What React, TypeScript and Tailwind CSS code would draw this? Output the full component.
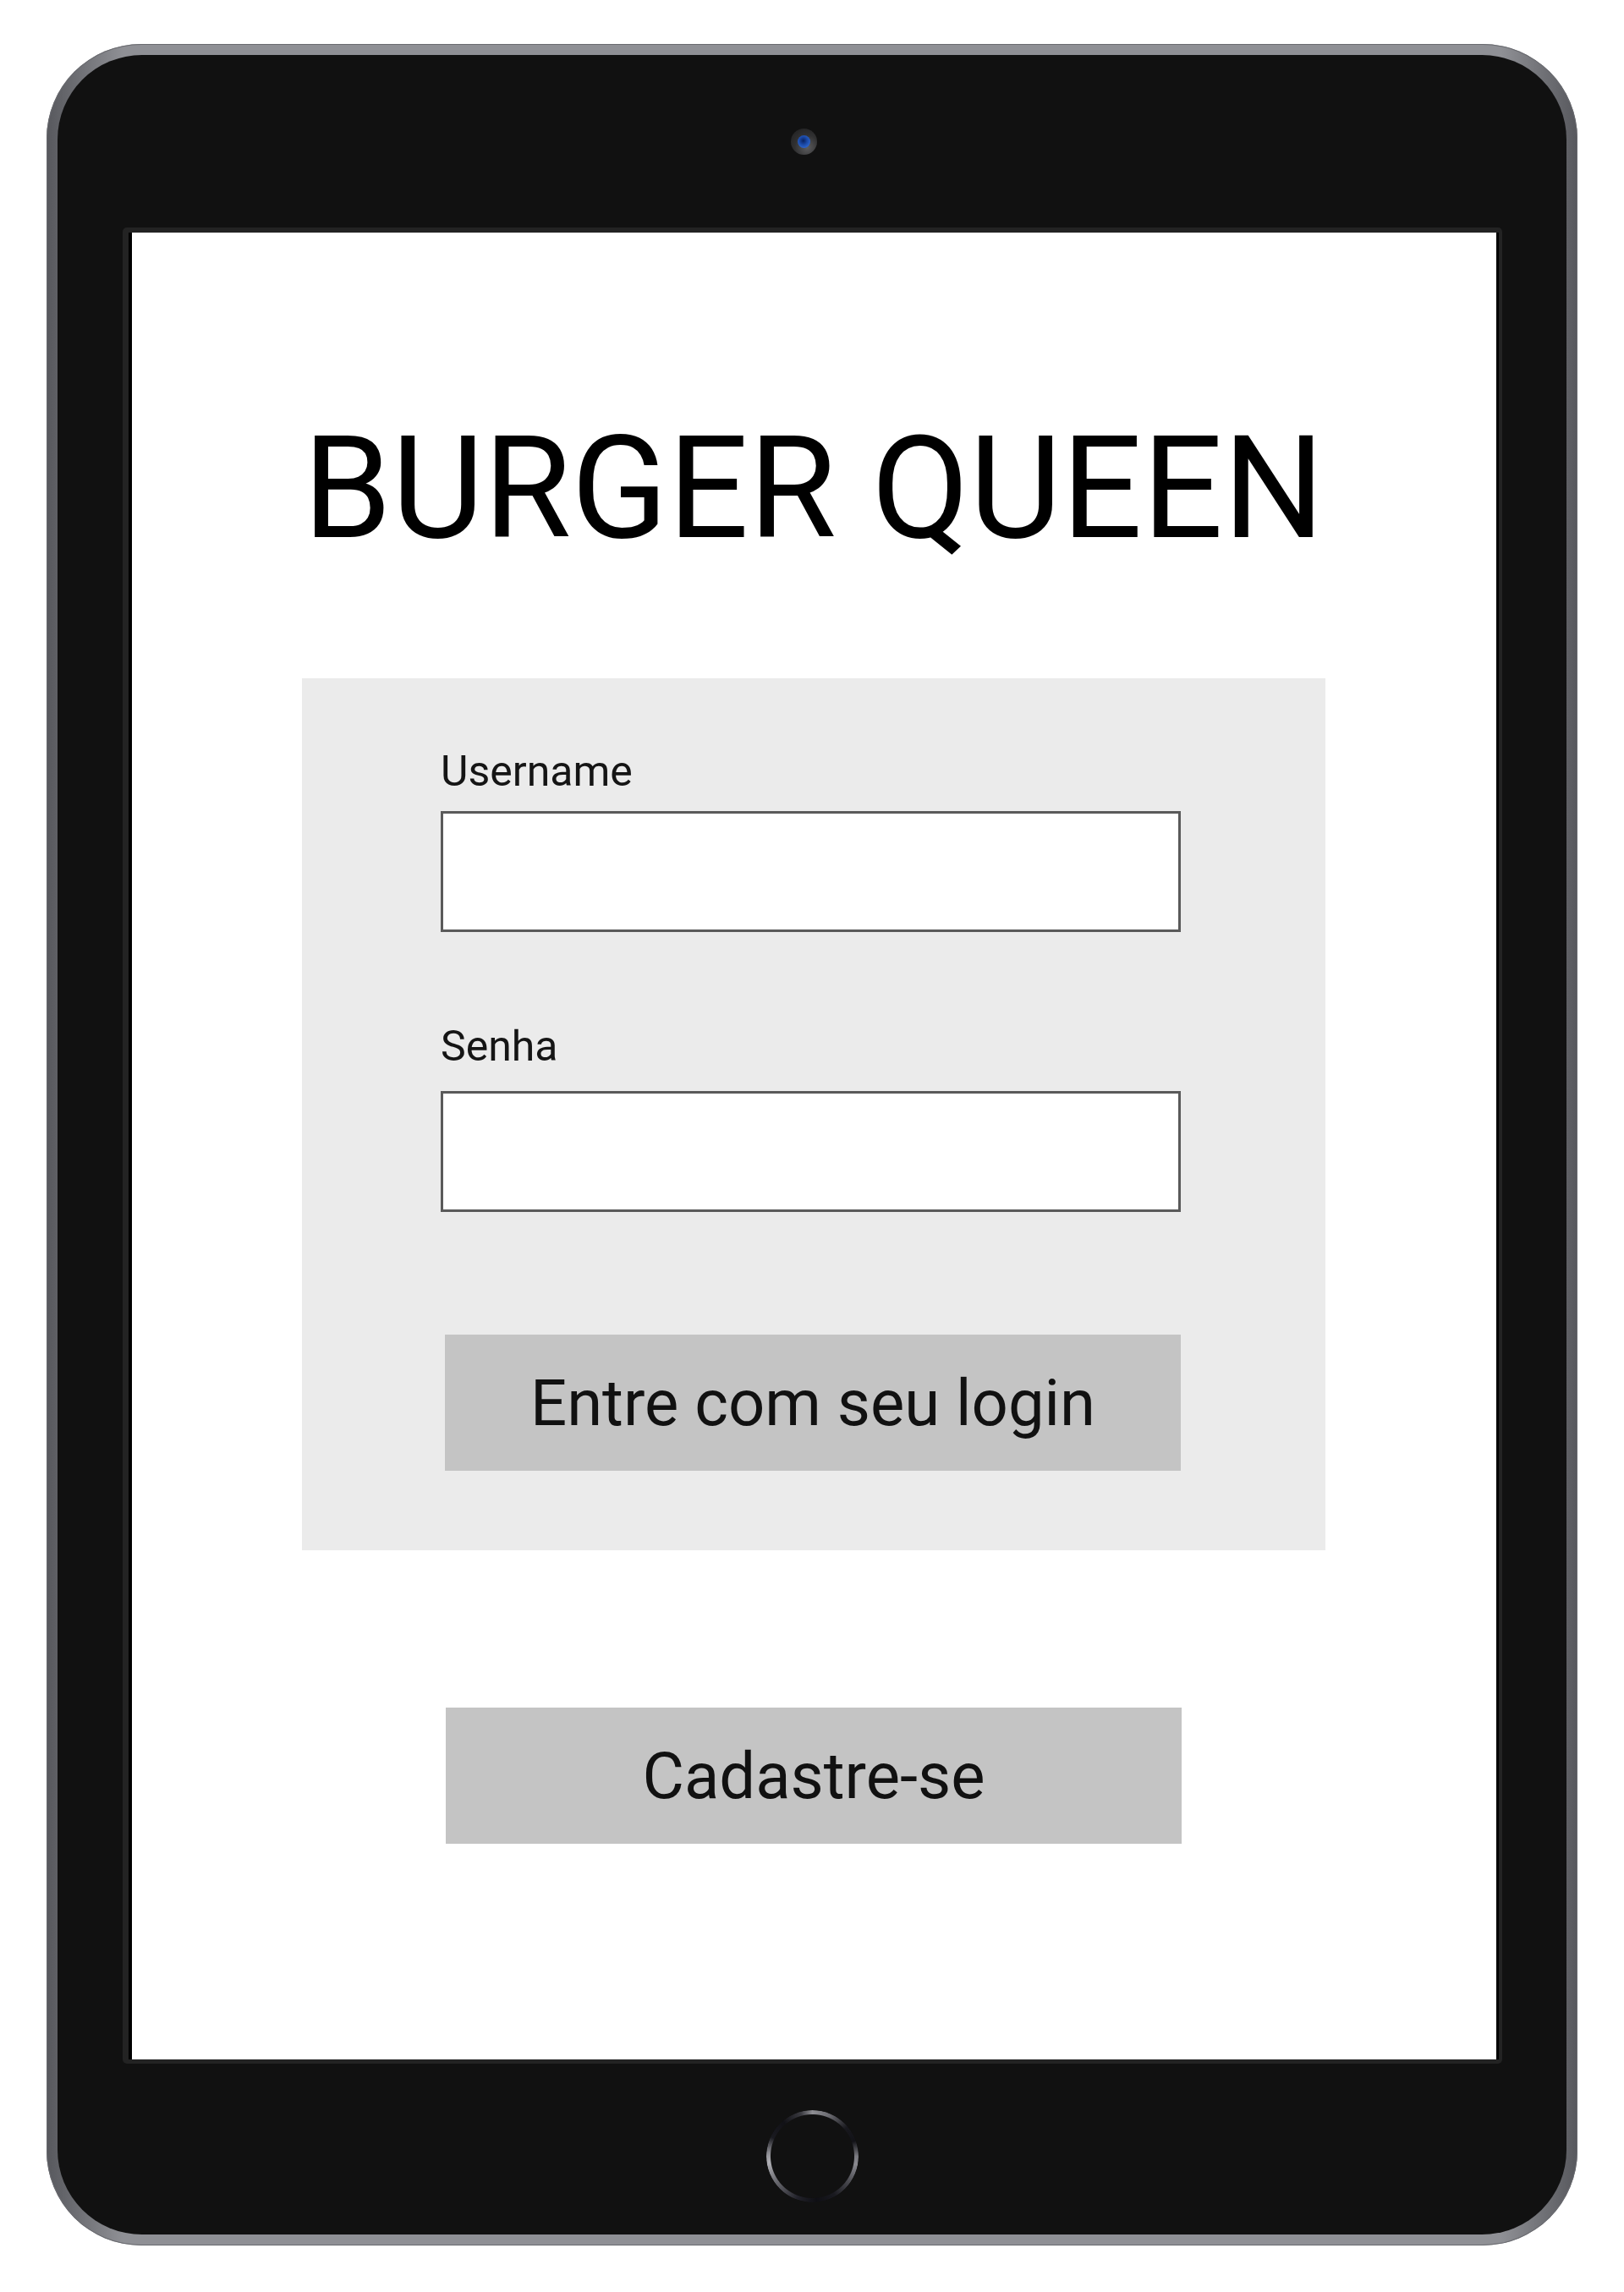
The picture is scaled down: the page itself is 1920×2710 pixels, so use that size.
import React from "react";

function Camera() {
    return (
        <div className="w-[31px] h-[31px] rounded-full bg-[radial-gradient(circle_at_62%_72%,#5c5c5e_0%,#303031_50%,#1d1d1e_100%)] flex items-center justify-center">
            <div className="w-[15px] h-[15px] rounded-full bg-[radial-gradient(circle_at_45%_42%,#0a2260_0%,#1b4aa8_40%,#2b62c8_70%,#173d8c_100%)]" />
        </div>
    );
}

function HomeButton() {
    return (
        <div className="w-[109px] h-[109px] rounded-full bg-[conic-gradient(from_0deg,#8e8e93_0deg,#6c6c72_22deg,#18181d_50deg,#121217_70deg,#7a7a80_90deg,#8a8a90_100deg,#4a4a50_125deg,#1a1a20_150deg,#0f0f14_175deg,#22222a_200deg,#6a6a70_235deg,#b0b0b5_262deg,#8a8a90_275deg,#1a1a20_295deg,#111116_320deg,#3a3a40_345deg,#8e8e93_360deg)] [mask-image:radial-gradient(circle,transparent_49px,#000_50px)]" />
    );
}

function Field({ label, gap, className = "" }: { label: string; gap: string; className?: string }) {
    return (
        <div className={`flex flex-col ${className}`}>
            <span className="text-[50px] leading-none text-[#151515]">{label}</span>
            <input
                type="text"
                className={`${gap} w-[875px] h-[143px] bg-white border-[3px] border-[#5a5a5a] outline-none`}
            />
        </div>
    );
}

export default function App() {
    return (
        <div className="w-[1920px] h-[2710px] bg-white pt-[52px] pl-[55px] font-['Roboto',sans-serif]">
            <div className="w-[1810px] h-[2603px] rounded-[112px] p-[13px] bg-[linear-gradient(90deg,#57585d_0%,#8f9095_5%,#8f9095_95%,#57585d_100%)] shadow-[inset_0_0_0_1px_#6a6b70]">
                <div className="w-full h-full rounded-[100px] bg-[#111111] flex flex-col items-center">
                    {/* top bezel */}
                    <div className="h-[204px] flex items-center pr-[20px]">
                        <Camera />
                    </div>

                    {/* screen */}
                    <div className="w-[1631px] h-[2171px] bg-[#232323] rounded-[5px] pl-[7px] pr-[4px] pt-[6px] pb-[5px]">
                        <div className="w-full h-full bg-white border-l-[4px] border-r-[3px] border-black flex flex-col items-center pt-[219px]">
                            <h1 className="text-[168px] leading-none text-black font-normal">
                                BURGER QUEEN
                            </h1>

                            <div className="mt-[140px] w-[1210px] h-[1031px] bg-[#ebebeb] pt-[85px] pl-[164px] flex flex-col">
                                <Field label="Username" gap="mt-[22px]" />
                                <Field label="Senha" gap="mt-[28px]" className="mt-[110px]" />
                                <button className="mt-[145px] ml-[5px] w-[870px] h-[161px] bg-[#c4c4c4] text-[76px] leading-none text-[#111] flex items-center justify-center">
                                    Entre com seu login
                                </button>
                            </div>

                            <button className="mt-[186px] w-[870px] h-[161px] bg-[#c4c4c4] text-[76px] leading-none text-[#111] flex items-center justify-center">
                                Cadastre-se
                            </button>
                        </div>
                    </div>

                    {/* bottom bezel */}
                    <div className="pt-[55px]">
                        <HomeButton />
                    </div>
                </div>
            </div>
        </div>
    );
}
